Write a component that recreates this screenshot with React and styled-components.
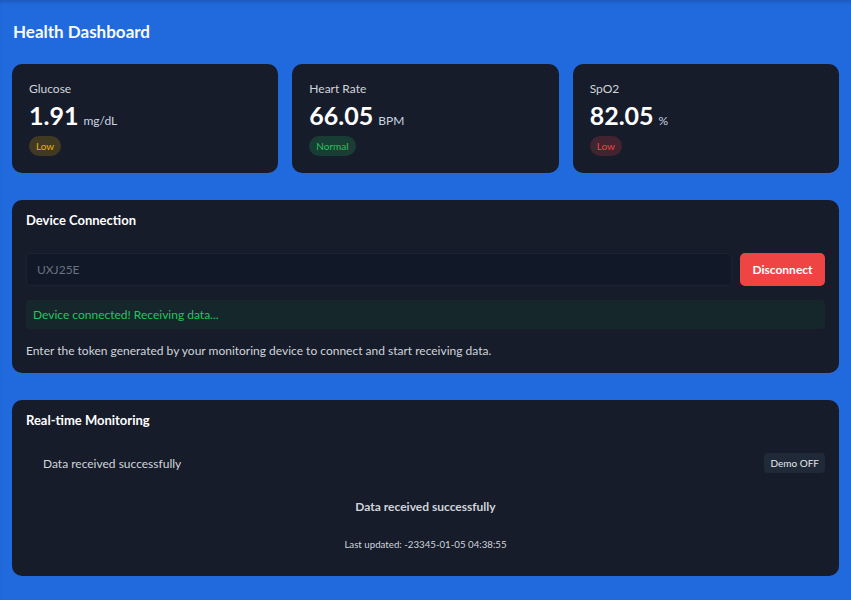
import React from "react";
import styled, { createGlobalStyle } from "styled-components";

const Global = createGlobalStyle`
  html, body { margin: 0; padding: 0; background: #216ade; }
  body { font-family: Lato, "Noto Sans", sans-serif; color: #fff; }
  * { box-sizing: border-box; }
`;

const Page = styled.div`
  min-height: 600px;
  padding: 20px 12px 24px 12px;
  box-shadow: inset 0 4px 4px -2px rgba(0, 0, 0, 0.18);
  display: flex;
  flex-direction: column;
`;

const Title = styled.h1`
  margin: 0 0 0 1px;
  font-size: 17px;
  font-weight: 700;
  line-height: 24px;
  color: #f8fafc;
`;

const MetricsGrid = styled.div`
  margin-top: 20px;
  display: grid;
  grid-template-columns: repeat(3, 1fr);
  gap: 14px;
`;

const Card = styled.div`
  background: #161c2a;
  border-radius: 10px;
`;

const MetricCard = styled(Card)`
  height: 109px;
  padding: 17px 17px;
  display: flex;
  flex-direction: column;
`;

const MetricLabel = styled.div`
  font-size: 12px;
  line-height: 16px;
  color: #d1d5db;
`;

const ValueRow = styled.div`
  margin-top: 3px;
  display: flex;
  align-items: baseline;
  gap: 5px;
`;

const Value = styled.span`
  font-size: 25px;
  font-weight: 700;
  line-height: 30px;
  color: #fff;
`;

const Unit = styled.span`
  font-size: 12px;
  color: #cbd5e1;
`;

const badgeColors = {
  yellow: { bg: "rgba(234, 179, 8, 0.2)", fg: "#eab308" },
  green: { bg: "rgba(34, 197, 94, 0.2)", fg: "#22c55e" },
  red: { bg: "rgba(239, 68, 68, 0.2)", fg: "#ef4444" },
};

const Badge = styled.span`
  margin-top: 6px;
  align-self: flex-start;
  height: 20px;
  padding: 0 7px;
  border-radius: 999px;
  font-size: 10px;
  line-height: 20px;
  background: ${(p) => badgeColors[p.$tone].bg};
  color: ${(p) => badgeColors[p.$tone].fg};
`;

const Section = styled(Card)`
  margin-top: ${(p) => p.$mt}px;
  padding: 12px 14px 14px 14px;
`;

const SectionTitle = styled.h2`
  margin: 0;
  font-size: 13px;
  font-weight: 700;
  line-height: 16px;
  color: #fff;
`;

const ConnectRow = styled.div`
  margin-top: 25px;
  display: flex;
  gap: 8px;
`;

const TokenInput = styled.input`
  flex: 1;
  height: 33px;
  padding: 0 10px;
  background: #111827;
  border: 1px solid #1b2231;
  border-radius: 4px;
  font-family: inherit;
  font-size: 12px;
  color: #9ca3af;
  outline: none;
  &::placeholder { color: #6b7280; }
`;

const DangerButton = styled.button`
  width: 85px;
  height: 33px;
  border: none;
  border-radius: 5px;
  background: #ef4444;
  color: #fff;
  font-family: inherit;
  font-size: 12px;
  font-weight: 700;
`;

const StatusBox = styled.div`
  margin-top: 14px;
  height: 29px;
  padding: 0 7px;
  display: flex;
  align-items: center;
  border-radius: 4px;
  background: #16272c;
  color: #22c55e;
  font-size: 12px;
`;

const HelpText = styled.p`
  margin: 14px 0 0 0;
  font-size: 12px;
  line-height: 16px;
  color: #d1d5db;
`;

const MonitorRow = styled.div`
  margin-top: 25px;
  padding-left: 17px;
  display: flex;
  align-items: center;
  justify-content: space-between;
`;

const MonitorText = styled.span`
  font-size: 12px;
  color: #d1d5db;
`;

const SmallButton = styled.button`
  height: 20px;
  padding: 0 6px;
  border: none;
  border-radius: 4px;
  background: #1f2937;
  color: #e5e7eb;
  font-family: inherit;
  font-size: 10px;
`;

const CenterBlock = styled.div`
  margin-top: 26px;
  display: flex;
  flex-direction: column;
  align-items: center;
  gap: 24px;
  padding-bottom: 12px;
`;

const CenterStrong = styled.div`
  font-size: 12px;
  font-weight: 700;
  color: #d1d5db;
`;

const Updated = styled.div`
  font-size: 9.7px;
  color: #d1d5db;
`;

const metrics = [
  { label: "Glucose", value: "1.91", unit: "mg/dL", status: "Low", tone: "yellow" },
  { label: "Heart Rate", value: "66.05", unit: "BPM", status: "Normal", tone: "green" },
  { label: "SpO2", value: "82.05", unit: "%", status: "Low", tone: "red" },
];

export default function App() {
  return (
    <>
      <Global />
      <Page>
        <Title>Health Dashboard</Title>
        <MetricsGrid>
          {metrics.map((m) => (
            <MetricCard key={m.label}>
              <MetricLabel>{m.label}</MetricLabel>
              <ValueRow>
                <Value>{m.value}</Value>
                <Unit>{m.unit}</Unit>
              </ValueRow>
              <Badge $tone={m.tone}>{m.status}</Badge>
            </MetricCard>
          ))}
        </MetricsGrid>

        <Section $mt={27}>
          <SectionTitle>Device Connection</SectionTitle>
          <ConnectRow>
            <TokenInput placeholder="UXJ25E" />
            <DangerButton>Disconnect</DangerButton>
          </ConnectRow>
          <StatusBox>Device connected! Receiving data...</StatusBox>
          <HelpText>
            Enter the token generated by your monitoring device to connect and start receiving data.
          </HelpText>
        </Section>

        <Section $mt={27}>
          <SectionTitle>Real-time Monitoring</SectionTitle>
          <MonitorRow>
            <MonitorText>Data received successfully</MonitorText>
            <SmallButton>Demo OFF</SmallButton>
          </MonitorRow>
          <CenterBlock>
            <CenterStrong>Data received successfully</CenterStrong>
            <Updated>Last updated: -23345-01-05 04:38:55</Updated>
          </CenterBlock>
        </Section>
      </Page>
    </>
  );
}
